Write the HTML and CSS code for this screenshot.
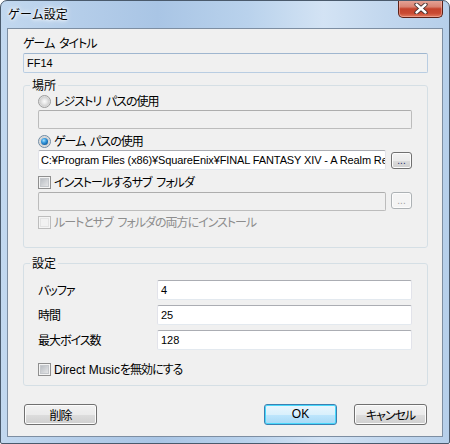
FILE: index.html
```html
<!DOCTYPE html>
<html lang="ja">
<head>
<meta charset="utf-8">
<title>ゲーム設定</title>
<link rel="stylesheet" href="styles.css">
</head>
<body>
<div class="window">
  <div class="titlebar">
    <span class="title">ゲーム設定</span>
    <div class="close">
      <svg width="14" height="11" viewBox="0 0 14 11">
        <path d="M2.5 1.5 L11.5 9.5 M11.5 1.5 L2.5 9.5" stroke="#3b2a2a" stroke-width="4.2" stroke-linecap="round"/>
        <path d="M2.5 1.5 L11.5 9.5 M11.5 1.5 L2.5 9.5" stroke="#ffffff" stroke-width="2.4" stroke-linecap="round"/>
      </svg>
    </div>
  </div>
  <div class="client">
    <div class="label first">ゲーム タイトル</div>
    <div class="tb readonly latin">FF14</div>

    <fieldset class="group loc">
      <legend>場所</legend>
      <div class="opt"><span class="radio"></span><span>レジストリ パスの使用</span></div>
      <div class="tb disabled row-tb1"></div>
      <div class="opt opt2"><span class="radio on"></span><span>ゲーム パスの使用</span></div>
      <div class="pathrow">
        <div class="tb latin path">C:¥Program Files (x86)¥SquareEnix¥FINAL FANTASY XIV - A Realm Reborn</div>
        <div class="dots">...</div>
      </div>
      <div class="opt opt3"><span class="check"></span><span>インストールするサブ フォルダ</span></div>
      <div class="pathrow row2">
        <div class="tb disabled path"></div>
        <div class="dots off">...</div>
      </div>
      <div class="opt opt4 dim"><span class="check off"></span><span>ルートとサブ フォルダの両方にインストール</span></div>
    </fieldset>

    <fieldset class="group set">
      <legend>設定</legend>
      <div class="field f1"><span class="flabel">バッファ</span><div class="tb white latin">4</div></div>
      <div class="field f2"><span class="flabel">時間</span><div class="tb white latin">25</div></div>
      <div class="field f3"><span class="flabel">最大ボイス数</span><div class="tb white latin">128</div></div>
      <div class="opt opt5"><span class="check"></span><span><span class="latin dm">Direct Music</span>を無効にする</span></div>
    </fieldset>

    <div class="buttons">
      <div class="btn">削除</div>
      <div class="btn default latin">OK</div>
      <div class="btn">キャンセル</div>
    </div>
  </div>
</div>
</body>
</html>
```

FILE: styles.css
```css
html, body {
  margin: 0;
  padding: 0;
  background: #ffffff;
}
body {
  font-family: "Noto Sans CJK JP", sans-serif;
  font-size: 12px;
  color: #000;
}
.window {
  width: 450px;
  height: 444px;
  box-sizing: border-box;
  border: 1px solid #4a5a6c;
  border-radius: 7px 7px 2px 2px;
  background: linear-gradient(to right, #c2d8ef 0%, #b4cde9 18%, #a9c5e5 35%, #b9d2ec 55%, #d3e3f4 72%, #c2d7ee 86%, #b6cfea 100%);
  display: flex;
  flex-direction: column;
  overflow: hidden;
}
.titlebar {
  height: 27px;
  display: flex;
  align-items: flex-start;
  flex: none;
}
.title {
  padding: 5px 0 0 7px;
  line-height: 16px;
  font-size: 12px;
  color: #000;
  text-shadow: 0 0 6px #ffffff, 0 0 4px #ffffff, 0 0 2px #ffffff;
}
.close {
  margin-left: auto;
  margin-right: 6px;
  margin-top: -1px;
  width: 45px;
  height: 18px;
  box-sizing: border-box;
  border: 1px solid #5c2118;
  border-top: none;
  border-radius: 0 0 5px 5px;
  background: linear-gradient(#e6a79a 0%, #d98372 40%, #c4432c 52%, #c94a32 78%, #e27c60 100%);
  box-shadow: inset 0 0 0 1px rgba(255, 200, 190, 0.45);
  display: flex;
  align-items: center;
  justify-content: center;
}
.close svg {
  display: block;
}
.client {
  flex: 1;
  margin: 0 6px 6px 6px;
  border: 1px solid #7d8ea2;
  background: #f0f0f0;
  padding: 7px 14px 0 15px;
  display: flex;
  flex-direction: column;
}
.latin {
  font-family: "Liberation Sans", "Noto Sans CJK JP", sans-serif;
}
.label, .opt, legend, .flabel, .btn {
  font-feature-settings: "palt";
  letter-spacing: -1px;
  word-spacing: 3px;
}
.btn.latin {
  letter-spacing: 0;
}
.dm {
  letter-spacing: 0;
  word-spacing: 0;
}
.label {
  height: 14px;
  line-height: 14px;
}
.tb {
  box-sizing: border-box;
  height: 20px;
  line-height: 18px;
  padding: 0 3px;
  border: 1px solid #e2e3ea;
  border-top-color: #abadb3;
  border-bottom-color: #e3e9ef;
  border-radius: 2px;
  background: #ffffff;
  white-space: nowrap;
  overflow: hidden;
  font-size: 11px;
}
.readonly {
  margin-top: 3px;
  background: #f0f0f0;
  border-color: #b9cde2;
  border-top-color: #9fb6cf;
}
.disabled {
  background: #f0f0f0;
  border-color: #bcbcbc;
  border-top-color: #adadad;
  height: 19px;
}
.group {
  margin: 5px 0 0 0;
  padding: 0 15px 0 14px;
  border: 1px solid #d5dfe5;
  border-radius: 3px;
  min-width: 0;
}
legend {
  margin-left: -8px;
  padding: 0 2px;
  line-height: 14px;
  height: 14px;
  letter-spacing: 0;
}
.opt {
  display: flex;
  align-items: center;
  gap: 3px;
  height: 14px;
  line-height: 14px;
  white-space: nowrap;
}
.loc .opt:first-of-type {
  margin-top: 2px;
}
.row-tb1 {
  margin-top: 2px;
}
.opt2 {
  margin-top: 5px;
}
.pathrow {
  display: flex;
  gap: 5px;
  margin-top: 2px;
}
.path {
  flex: 1;
  min-width: 0;
  height: 20px;
  padding: 0 2px;
  letter-spacing: -0.12px;
}
.row2 {
  margin-top: 3px;
}
.row2 .path {
  height: 19px;
}
.opt3 {
  margin-top: 5px;
}
.opt4 {
  margin-top: 4px;
  margin-bottom: 18px;
}
.dim {
  color: #8d8d8d;
}
.radio {
  flex: none;
  width: 13px;
  height: 13px;
  box-sizing: border-box;
  border-radius: 50%;
  border: 1px solid #9c9c9c;
  background: radial-gradient(circle at 50% 50%, #fafafa 0, #ececec 2px, #d2d2d2 4.5px, #e6e6e6 5.5px);
  position: relative;
}
.radio.on {
  border-color: #6f8aa3;
}
.radio.on::after {
  content: "";
  position: absolute;
  left: 2px;
  top: 2px;
  width: 7px;
  height: 7px;
  border-radius: 50%;
  background: radial-gradient(circle at 40% 35%, #a8e2ff 0, #3b9de0 35%, #0e5fa2 75%, #0a3f73 100%);
}
.check {
  flex: none;
  width: 13px;
  height: 13px;
  box-sizing: border-box;
  border: 1px solid #8f8f8f;
  background: linear-gradient(135deg, #aeb3b9 0%, #d6d8db 60%, #eeeeee 100%);
  box-shadow: inset 0 0 0 1px #f4f4f4, inset 0 0 0 2px #c5c8cc;
}
.check.off {
  border-color: #bdbdbd;
  background: #f2f2f2;
  box-shadow: inset 0 0 0 1px #f4f4f4, inset 0 0 0 2px #e4e4e4;
}
.dots {
  flex: none;
  width: 21px;
  height: 17px;
  margin-top: 2px;
  box-sizing: border-box;
  border: 1px solid #707070;
  border-radius: 3px;
  background: linear-gradient(#f2f2f2 0%, #ebebeb 50%, #dddddd 51%, #cfcfcf 100%);
  box-shadow: inset 0 0 0 1px #fcfcfc;
  text-align: center;
  line-height: 15px;
  font-family: "Liberation Sans", sans-serif;
  font-size: 10px;
  color: #1c2a63;
  overflow: hidden;
}
.dots.off {
  margin-top: 0;
  border-color: #adb2b5;
  background: #f4f4f4;
  color: #a0a0a0;
}
.set {
  margin-top: 8px;
}
.field {
  display: flex;
  align-items: center;
}
.flabel {
  width: 119px;
  flex: none;
  line-height: 14px;
}
.field .tb {
  flex: 1;
  min-width: 0;
  height: 20px;
}
.f1 {
  margin-top: 10px;
}
.f2 {
  margin-top: 5px;
}
.f3 {
  margin-top: 5px;
}
.opt5 {
  margin-top: 12px;
  margin-bottom: 9px;
}
.buttons {
  display: flex;
  padding: 0 1px;
  margin-top: 18px;
}
.btn {
  width: 73px;
  height: 21px;
  box-sizing: border-box;
  border: 1px solid #707070;
  border-radius: 3px;
  background: linear-gradient(#f2f2f2 0%, #ebebeb 50%, #dddddd 51%, #cfcfcf 100%);
  box-shadow: inset 0 0 0 1px #fcfcfc;
  text-align: center;
  line-height: 19px;
  font-size: 12px;
}
.btn.default {
  margin-left: auto;
  margin-right: 17px;
  border-color: #3c7fb1;
  background: linear-gradient(#eaf6fd 0%, #d9f0fc 50%, #bee6fd 51%, #a7d9f5 100%);
  box-shadow: inset 0 0 0 1px #48d8fb;
}
```
